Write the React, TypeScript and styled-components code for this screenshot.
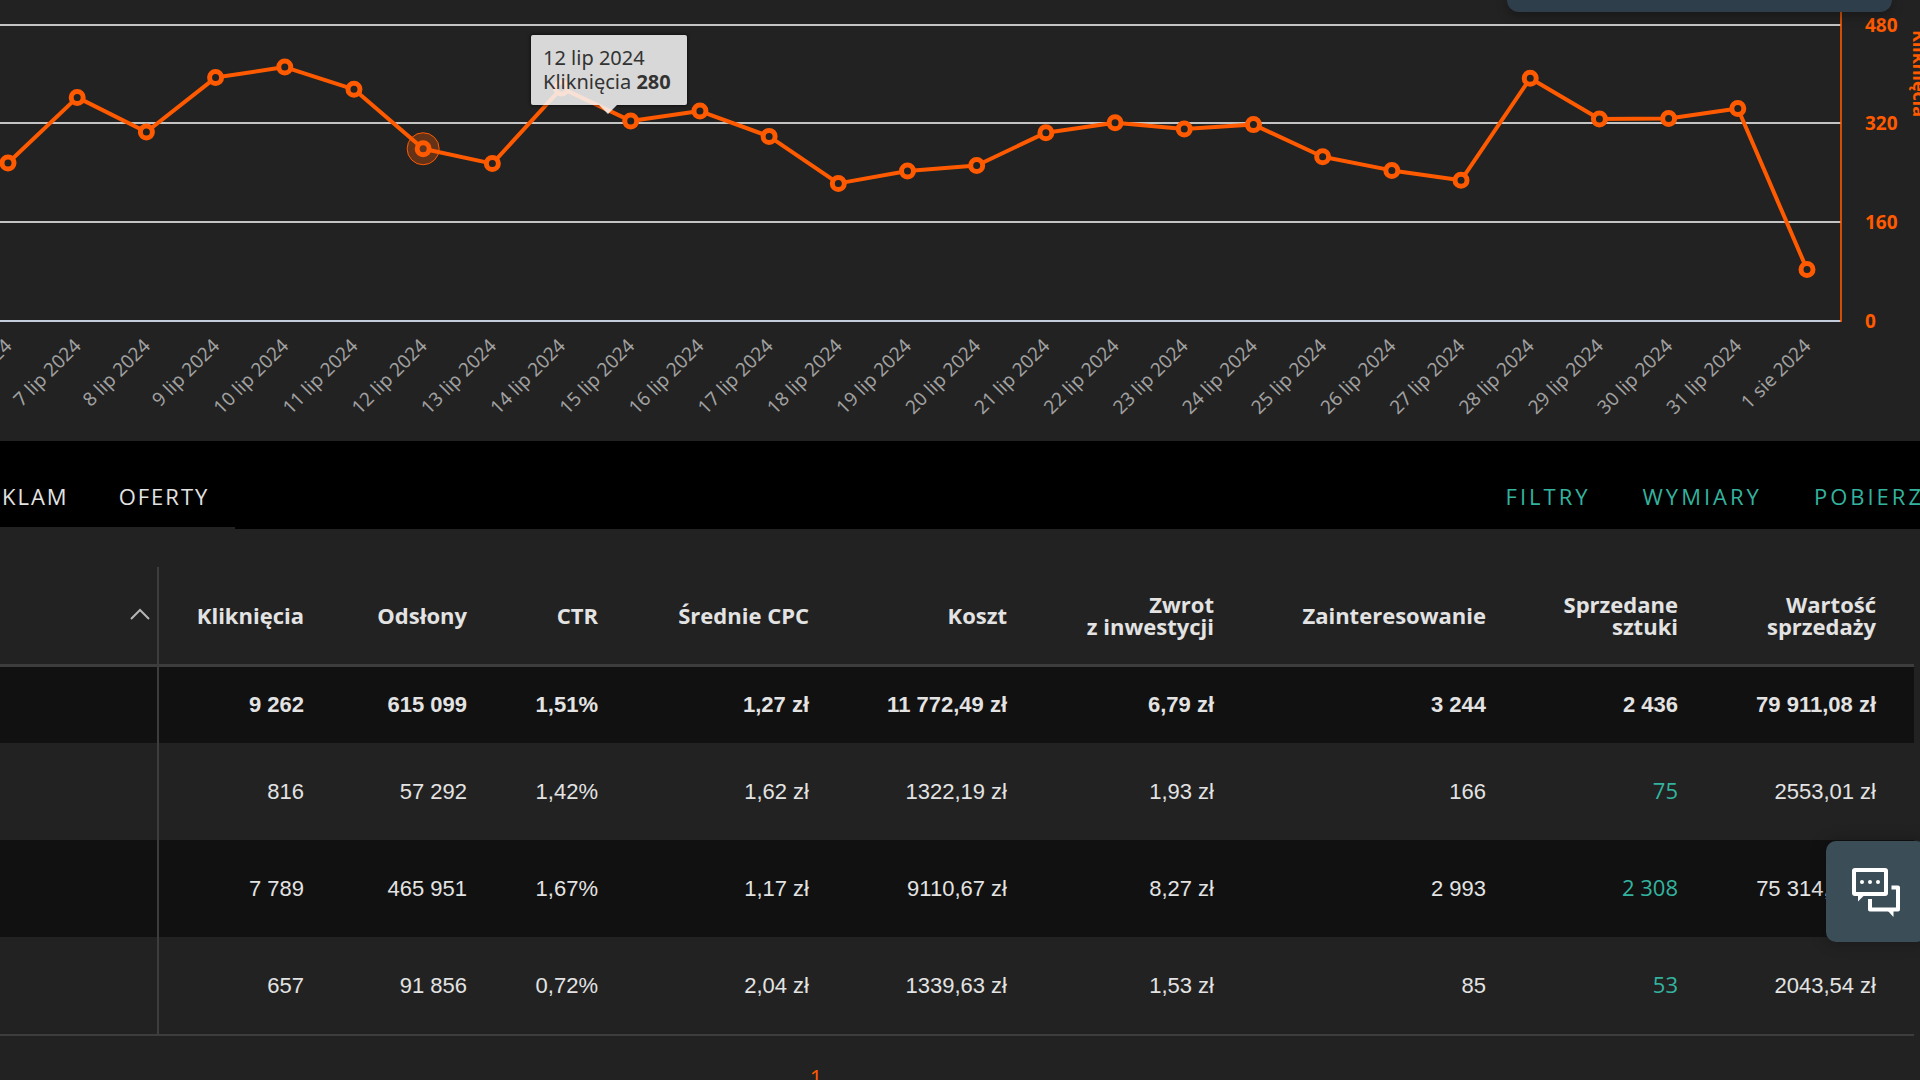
import React from "react";
import styled, { createGlobalStyle } from "styled-components";

const palette = {
  panel: "#222222",
  stripe: "#111111",
  rule: "#3d3d3d",
  text: "#e3e3e3",
  accent: "#ff5a00",
  link: "#33b39f",
};

const uiFont = '"Open Sans", "Noto Sans", sans-serif';
const numberFont = '"Liberation Sans", Arial, sans-serif';

const GlobalStyle = createGlobalStyle`
  *, *::before, *::after { box-sizing: border-box; }
  body { margin: 0; background: ${palette.panel}; }
`;

const Page = styled.main`
  position: relative;
  display: flex;
  flex-direction: column;
  height: 100vh;
  overflow: hidden;
  background: ${palette.panel};
  color: ${palette.text};
  font-family: ${uiFont};
  font-size: 22px;
`;

const ChartPanel = styled.figure`
  position: relative;
  flex: none;
  margin: 0;
`;

const ChartSvg = styled.svg`
  display: block;
  width: 100%;
  height: auto;
  font-family: "Noto Sans", sans-serif;
`;

const DateLabel = styled.text`
  font-size: 19px;
  fill: #a0a0a0;
  text-anchor: end;
`;

const ScaleLabel = styled.text`
  font-size: 19px;
  font-weight: 700;
  fill: ${palette.accent};
`;

const ScaleTitle = styled(ScaleLabel)`
  font-size: 18px;
`;

const Tooltip = styled.div`
  position: absolute;
  top: 35px;
  left: 531px;
  padding: 11px 16px 11px 12px;
  border-radius: 2px;
  background: rgba(247, 247, 247, 0.86);
  box-shadow: 0 0 3px 1px rgba(0, 0, 0, 0.5);
  color: #333333;
  font-family: "Noto Sans", sans-serif;
  font-size: 20px;
  line-height: 24px;
  white-space: nowrap;

  &::after {
    content: "";
    position: absolute;
    top: 100%;
    left: 68px;
    border: 9px solid transparent;
    border-top-color: rgba(247, 247, 247, 0.86);
    border-bottom: 0;
  }
`;

const Toolbar = styled.div`
  display: flex;
  flex: none;
  align-items: stretch;
  height: 88px;
  background: #000000;
`;

const Tabs = styled.nav`
  display: flex;
  gap: 50px;
  padding: 0 26px 0 2px;
  border-bottom: 2px solid ${palette.panel};
`;

const Tab = styled.button`
  padding: 24px 0 0;
  border: 0;
  background: none;
  color: ${palette.text};
  font: 22px ${uiFont};
  letter-spacing: 2px;
  cursor: pointer;
`;

const Actions = styled.div`
  display: flex;
  gap: 52px;
  margin-left: auto;
  margin-right: -4px;
`;

const Action = styled.button`
  padding: 22px 0 0;
  border: 0;
  background: none;
  color: ${palette.link};
  font: 22px ${uiFont};
  letter-spacing: 3px;
  cursor: pointer;
`;

const TableArea = styled.section`
  flex: none;
  padding: 38px 6px 0 0;
`;

const StatsTable = styled.table`
  width: 100%;
  table-layout: fixed;
  border-collapse: separate;
  border-spacing: 0;
  border-bottom: 2px solid ${palette.rule};
`;

const Col = styled.col<{ $width: number }>`
  width: ${(p) => p.$width}px;
`;

const SortCell = styled.th`
  padding: 0 6px 4px 0;
  border-right: 2px solid ${palette.rule};
  border-bottom: 3px solid ${palette.rule};
  text-align: right;
  line-height: 0;
`;

const SortButton = styled.button`
  padding: 0;
  border: 0;
  background: none;
  line-height: 0;
  cursor: pointer;
`;

const HeadCell = styled.th`
  height: 100px;
  padding: 0 38px 2px 0;
  border-bottom: 3px solid ${palette.rule};
  font-size: 22px;
  font-weight: 700;
  line-height: 22px;
  text-align: right;
  white-space: pre-line;
`;

const NameCell = styled.td`
  padding: 0;
  border-right: 2px solid ${palette.rule};
`;

const Cell = styled.td`
  padding: 0 38px 0 0;
  font: inherit;
  line-height: 24px;
  text-align: right;
  white-space: nowrap;
`;

const Row = styled.tr<{ $dark?: boolean; $total?: boolean }>`
  height: ${(p) => (p.$total ? 76 : 97)}px;
  background: ${(p) => (p.$dark ? palette.stripe : palette.panel)};
  font-family: ${numberFont};
  font-size: 22px;
  font-weight: ${(p) => (p.$total ? 700 : 400)};
`;

const CountLink = styled.a`
  color: ${palette.link};
  font-family: ${uiFont};
  line-height: 0;
  text-decoration: none;
`;

const Pagination = styled.nav`
  display: flex;
  justify-content: center;
  padding: 26px 288px 0 0;
`;

const PageLink = styled.a`
  color: ${palette.accent};
  font-size: 22px;
  line-height: 30px;
  text-decoration: none;
`;

const Notice = styled.div`
  position: absolute;
  top: 0;
  right: 28px;
  width: 385px;
  height: 12px;
  border-radius: 0 0 12px 12px;
  background: #2f3e4b;
  box-shadow: 0 2px 12px rgba(0, 0, 0, 0.4);
`;

const ChatButton = styled.button`
  position: absolute;
  right: -6px;
  bottom: 138px;
  width: 100px;
  height: 101px;
  padding: 0 0 0 26px;
  border: 0;
  border-radius: 10px;
  background: #3b4e58;
  box-shadow: 0 0 16px rgba(0, 0, 0, 0.3);
  text-align: left;
  line-height: 0;
  cursor: pointer;
`;

const points: [string, number][] = [
  ["6 lip 2024", 257],
  ["7 lip 2024", 363],
  ["8 lip 2024", 307],
  ["9 lip 2024", 395],
  ["10 lip 2024", 412],
  ["11 lip 2024", 376],
  ["12 lip 2024", 280],
  ["13 lip 2024", 256],
  ["14 lip 2024", 378],
  ["15 lip 2024", 325],
  ["16 lip 2024", 341],
  ["17 lip 2024", 300],
  ["18 lip 2024", 224],
  ["19 lip 2024", 244],
  ["20 lip 2024", 253],
  ["21 lip 2024", 306],
  ["22 lip 2024", 322],
  ["23 lip 2024", 312],
  ["24 lip 2024", 319],
  ["25 lip 2024", 267],
  ["26 lip 2024", 245],
  ["27 lip 2024", 229],
  ["28 lip 2024", 394],
  ["29 lip 2024", 328],
  ["30 lip 2024", 329],
  ["31 lip 2024", 345],
  ["1 sie 2024", 85],
];

const gridLines = [
  { value: 480, y: 25 },
  { value: 320, y: 123 },
  { value: 160, y: 222 },
  { value: 0, y: 321 },
];

const selected = 6;
const xOf = (i: number) => 8 + (i * 1799) / 26;
const yOf = (v: number) => 322 - (v * 297) / 480;

function ClicksChart() {
  const path = points.map(([, v], i) => `${xOf(i)},${yOf(v)}`).join(" ");
  return (
    <ChartSvg viewBox="0 0 1920 441" role="img" aria-label="Kliknięcia">
      {gridLines.map(({ value, y }) => (
        <line key={value} x1="0" x2="1841" y1={y} y2={y} stroke={value ? "#c4c4c4" : "#c3cddb"} strokeWidth="2" />
      ))}
      <line x1="1841" x2="1841" y1="0" y2="322" stroke={palette.accent} strokeOpacity="0.8" strokeWidth="2" />
      <circle cx={xOf(selected)} cy={yOf(280)} r="16" fill={palette.accent} fillOpacity="0.3" stroke={palette.accent} strokeWidth="1" />
      <polyline points={path} fill="none" stroke={palette.accent} strokeWidth="4" strokeLinejoin="round" />
      {points.map(([label, v], i) => (
        <circle
          key={label}
          cx={xOf(i)}
          cy={yOf(v)}
          r="6"
          fill={i === selected ? "#64341d" : palette.panel}
          stroke={palette.accent}
          strokeWidth="5"
        />
      ))}
      {points.map(([label], i) => (
        <DateLabel key={label} transform={`translate(${xOf(i) + 5} 347) rotate(-45)`}>
          {label}
        </DateLabel>
      ))}
      {gridLines.map(({ value, y }) => (
        <ScaleLabel key={value} x="1865" y={y + 7}>
          {value}
        </ScaleLabel>
      ))}
      <ScaleTitle transform="translate(1913 30) rotate(90)">Kliknięcia</ScaleTitle>
    </ChartSvg>
  );
}

function ChatIcon() {
  return (
    <svg width="48" height="50" viewBox="0 0 48 50" fill="none" stroke="#ffffff" strokeLinejoin="round">
      <rect x="2" y="3" width="32" height="24" rx="1" strokeWidth="4" />
      <path d="M6 28v6.500l6.500-6.500z" fill="#ffffff" stroke="none" />
      <path d="M39.500 20.500h6.500v22H18V32" strokeWidth="4" />
      <path d="M35 43l6.500 7v-7z" fill="#ffffff" stroke="none" />
      <g fill="#ffffff" stroke="none">
        <circle cx="10" cy="15" r="2" />
        <circle cx="18" cy="15" r="2" />
        <circle cx="26" cy="15" r="2" />
      </g>
    </svg>
  );
}

const columns = [
  { title: "Kliknięcia", width: 183 },
  { title: "Odsłony", width: 163 },
  { title: "CTR", width: 131 },
  { title: "Średnie CPC", width: 211 },
  { title: "Koszt", width: 198 },
  { title: "Zwrot\nz\u00a0inwestycji", width: 207 },
  { title: "Zainteresowanie", width: 272 },
  { title: "Sprzedane\nsztuki", width: 192 },
  { title: "Wartość\nsprzedaży", width: 198 },
];

const totals = ["9 262", "615 099", "1,51%", "1,27 zł", "11 772,49 zł", "6,79 zł", "3 244", "2 436", "79 911,08 zł"];

const rows = [
  ["816", "57 292", "1,42%", "1,62 zł", "1322,19 zł", "1,93 zł", "166", "75", "2553,01 zł"],
  ["7 789", "465 951", "1,67%", "1,17 zł", "9110,67 zł", "8,27 zł", "2 993", "2 308", "75 314,53 zł"],
  ["657", "91 856", "0,72%", "2,04 zł", "1339,63 zł", "1,53 zł", "85", "53", "2043,54 zł"],
];

const soldColumn = 7;

export default function App() {
  return (
    <Page>
      <GlobalStyle />
      <ChartPanel>
        <ClicksChart />
        <Tooltip>
          12 lip 2024
          <br />
          Kliknięcia <b>280</b>
        </Tooltip>
      </ChartPanel>
      <Toolbar>
        <Tabs>
          <Tab>KLAM</Tab>
          <Tab>OFERTY</Tab>
        </Tabs>
        <Actions>
          <Action>FILTRY</Action>
          <Action>WYMIARY</Action>
          <Action>POBIERZ</Action>
        </Actions>
      </Toolbar>
      <TableArea>
        <StatsTable>
          <colgroup>
            <Col $width={159} />
            {columns.map((c) => (
              <Col key={c.title} $width={c.width} />
            ))}
          </colgroup>
          <thead>
            <tr>
              <SortCell>
                <SortButton aria-label="Sortuj">
                  <svg width="22" height="14" viewBox="0 0 22 14" fill="none" stroke="#b5b5b5" strokeWidth="2">
                    <path d="M2 12 11 3l9 9" />
                  </svg>
                </SortButton>
              </SortCell>
              {columns.map((c) => (
                <HeadCell key={c.title} scope="col">
                  {c.title}
                </HeadCell>
              ))}
            </tr>
          </thead>
          <tbody>
            <Row $dark $total>
              <NameCell />
              {totals.map((value, i) => (
                <Cell key={i}>{value}</Cell>
              ))}
            </Row>
            {rows.map((row, r) => (
              <Row key={r} $dark={r % 2 === 1}>
                <NameCell />
                {row.map((value, i) => (
                  <Cell key={i}>{i === soldColumn ? <CountLink href="#">{value}</CountLink> : value}</Cell>
                ))}
              </Row>
            ))}
          </tbody>
        </StatsTable>
      </TableArea>
      <Pagination>
        <PageLink href="#">1</PageLink>
      </Pagination>
      <Notice />
      <ChatButton aria-label="Czat">
        <ChatIcon />
      </ChatButton>
    </Page>
  );
}
